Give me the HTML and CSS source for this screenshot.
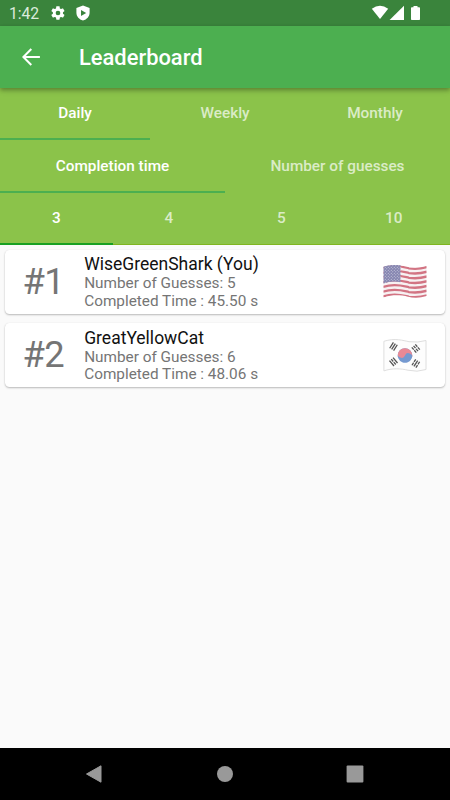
FILE: index.html
```html
<!DOCTYPE html>
<html lang="en">
<head>
<meta charset="utf-8">
<title>Leaderboard</title>
<link rel="stylesheet" href="styles.css">
</head>
<body>
<div class="screen">
  <div class="status">
    <span class="clock">1:42</span>
    <svg class="gear" width="16" height="16" viewBox="0 0 24 24"><path fill="#fff" fill-rule="evenodd" d="M19.4 13c.1-.3.1-.6.1-1s0-.7-.1-1l2.1-1.600c.2-.2.2-.4.1-.6l-2-3.500c-.1-.2-.4-.3-.6-.2l-2.500 1c-.5-.4-1.100-.7-1.700-1l-.4-2.600c0-.3-.2-.5-.5-.5h-4c-.3 0-.5.200-.5.500l-.4 2.600c-.6.300-1.200.600-1.700 1l-2.500-1c-.2-.1-.5 0-.6.200l-2 3.500c-.1.200-.1.400.1.600l2.100 1.600c-.1.300-.1.700-.1 1s0 .7.100 1l-2.100 1.600c-.2.200-.2.400-.1.600l2 3.500c.1.200.4.300.6.200l2.500-1c.5.400 1.100.700 1.700 1l.4 2.600c0 .3.200.500.500.500h4c.3 0 .5-.2.500-.5l.4-2.600c.6-.3 1.200-.6 1.700-1l2.500 1c.2.100.5 0 .6-.2l2-3.500c.1-.2.100-.4-.1-.6zM12 15.500a3.500 3.500 0 1 1 0-7 3.500 3.500 0 0 1 0 7z"/></svg>
    <svg class="shield" width="14" height="16" viewBox="0 0 14 16"><path fill="#fff" fill-rule="evenodd" d="M7 .5l6.600 2.600v4.600c0 3.700-2.800 6.700-6.600 7.900C3.200 14.400.4 11.400.4 7.700V3.100zM5 4.900v6l5.200-3z"/></svg>
    <svg class="signals" width="50" height="16" viewBox="0 0 50 16"><g fill="#fff"><path d="M.8 3.700Q9-2.100 17.200 3.700L9 14z"/><path d="M33 .8V15H18.600z"/><path d="M42.500 1h4v1.200h1.700q.8 0 .8.800v11.200q0 .8-.8.800h-7.400q-.8 0-.8-.8V3q0-.8.800-.8h1.700z"/></g></svg>
  </div>
  <header class="appbar">
    <svg class="back" width="18" height="18" viewBox="0 0 18 18"><path fill="none" stroke="#fff" stroke-width="2" d="M17.900 9H1.500M9.300 1L1.400 9l7.900 8"/></svg>
    <h1>Leaderboard</h1>
  </header>
  <nav class="tabs">
    <div class="row"><span class="tab on">Daily</span><span class="tab">Weekly</span><span class="tab">Monthly</span></div>
    <div class="row"><span class="tab on">Completion time</span><span class="tab">Number of guesses</span></div>
    <div class="row last"><span class="tab on">3</span><span class="tab">4</span><span class="tab">5</span><span class="tab">10</span></div>
  </nav>
  <main class="list">
    <article class="card">
      <div class="rank">#1</div>
      <div class="info"><h2>WiseGreenShark (You)</h2><p>Number of Guesses: 5</p><p>Completed Time : 45.50 s</p></div>
      <svg class="flag" width="44" height="34" viewBox="0 0 44 34">
        <defs>
          <clipPath id="wave"><path d="M.5 1.800C12-2 20 1 26 2.200Q35 3.500 43.500 1V31Q34 34 25 31.700C18 30 9 29.500.5 32.500z"/></clipPath>
          <pattern id="stars" width="3" height="3" patternUnits="userSpaceOnUse"><rect width="3" height="3" fill="#8585b0"/><circle cx=".8" cy=".8" r=".55" fill="#d4d4e4"/><circle cx="2.300" cy="2.300" r=".55" fill="#d4d4e4"/></pattern>
        </defs>
        <g clip-path="url(#wave)">
          <path fill="#f7f1f2" d="M0 0h44v34H0z"/>
          <g fill="none" stroke="#d27483" stroke-width="2.350">
            <path id="s" d="M0 3C12-1 20 2 26 3.300Q35 4.600 44 2"/>
            <use href="#s" y="4.750"/><use href="#s" y="9.500"/><use href="#s" y="14.250"/><use href="#s" y="19"/><use href="#s" y="23.750"/><use href="#s" y="28.500"/>
          </g>
          <path fill="url(#stars)" d="M0 0H17.500V17.200Q8 15.500 0 18.700z"/>
        </g>
      </svg>
    </article>
    <article class="card">
      <div class="rank">#2</div>
      <div class="info"><h2>GreatYellowCat</h2><p>Number of Guesses: 6</p><p>Completed Time : 48.06 s</p></div>
      <svg class="flag" width="44" height="34" viewBox="0 0 44 34">
        <path fill="#fdfdfd" stroke="#dedede" d="M.9 2.300C12-1.200 20 1.500 26 2.700Q35 3.900 43 1.500V30.500Q34 33.500 25 31.200C18 29.500 9 29 .9 31.900z"/>
        <g transform="rotate(22 22 16.500)">
          <circle cx="22" cy="16.500" r="7.300" fill="#7599d0"/>
          <path fill="#e98995" d="M14.700 16.500a7.300 7.300 0 0 1 14.600 0a3.650 3.650 0 0 0-7.300 0a3.650 3.650 0 0 1-7.300 0z"/>
        </g>
        <g fill="none" stroke="#555" stroke-width="1.300">
          <g transform="translate(10.500 7.500) rotate(-58)"><path d="M-3.500-2.300h7M-3.500 0h7M-3.500 2.300h7"/></g>
          <g transform="translate(32.800 9.500) rotate(50)"><path stroke-dasharray="3.100 .8" d="M-3.500-2.300h7M-3.500 0h7M-3.500 2.300h7"/></g>
          <g transform="translate(10.500 22.800) rotate(50)"><path d="M-3.500-2.300h7M-3.500 2.300h7"/><path stroke-dasharray="3.100 .8" d="M-3.500 0h7"/></g>
          <g transform="translate(32.800 24.500) rotate(-58)"><path stroke-dasharray="3.100 .8" d="M-3.500-2.300h7M-3.500 2.300h7"/><path d="M-3.500 0h7"/></g>
        </g>
      </svg>
    </article>
  </main>
  <footer class="nav">
    <svg width="18" height="20" viewBox="0 0 18 20"><path fill="#999" stroke="#999" stroke-linejoin="round" d="M1.500 10L16 1.800v16.400z"/></svg>
    <svg class="home" width="18" height="20" viewBox="0 0 18 20"><circle cx="9" cy="10" r="8" fill="#999"/></svg>
    <svg width="18" height="20" viewBox="0 0 18 20"><rect x=".6" y="1.600" width="16.800" height="16.800" rx="1" fill="#999"/></svg>
  </footer>
</div>
</body>
</html>
```

FILE: styles.css
```css
* { box-sizing: border-box; }
body { margin: 0; font-family: Roboto, sans-serif; }
h1, h2, p { margin: 0; }
.screen { width: 450px; height: 800px; display: flex; flex-direction: column; background: #fafafa; overflow: hidden; }
.status { height: 26px; flex: none; display: flex; align-items: center; padding: 0 29px 0 9px; background: #3a843c; color: #dcebdc; }
.clock { width: 41px; font-size: 15.700px; line-height: 26px; padding-top: 2px; letter-spacing: -.1px; }
.shield { margin-left: 9.500px; }
.signals { margin-left: auto; margin-top: -1px; }
.appbar { height: 61.5px; flex: none; display: flex; align-items: center; padding-left: 21.500px; background: #4caf50; color: #fff; box-shadow: 0 2px 4px rgba(0,0,0,.24), 0 3px 6px rgba(0,0,0,.12); position: relative; z-index: 1; }
.appbar h1 { margin-left: 39.500px; padding-top: 2px; font-size: 21.900px; font-weight: 500; letter-spacing: 0; }
.tabs { flex: none; background: #8bc34a; }
.row { display: flex; height: 52.500px; }
.tab { flex: 1; display: flex; align-items: center; justify-content: center; padding-top: 1px; font-size: 15.330px; font-weight: 500; color: rgba(255,255,255,.7); border-bottom: 2px solid transparent; }
.tab.on { color: #fff; border-color: #4caf50; }
.last { border-bottom: 1px solid #7fb51f; }
.last .tab { margin-bottom: -1px; }
.last .on { border-bottom: 2px solid #18a022; }
.list { flex: 1; padding: 4.900px; display: flex; flex-direction: column; gap: 9.200px; }
.card { height: 64.100px; display: flex; align-items: center; padding: 0 18.300px 0 17.600px; background: #fff; border-radius: 4.400px; box-shadow: 0 1px 2px rgba(0,0,0,.26), 0 0 1px rgba(0,0,0,.08); }
.rank { width: 61.700px; font-size: 36.300px; line-height: 40px; color: #757575; letter-spacing: -.5px; }
.flag { margin-top: 1px; }
.info { flex: 1; color: #757575; }
.info h2 { font-size: 17.500px; line-height: 20px; font-weight: 400; color: #111; }
.info p { font-size: 15.330px; line-height: 17.500px; position: relative; top: 1px; }
.nav { height: 52.500px; flex: none; display: flex; align-items: center; justify-content: space-between; padding: 0 86.500px 0 85px; background: #000; }
.home { margin-left: 1.500px; }
```
